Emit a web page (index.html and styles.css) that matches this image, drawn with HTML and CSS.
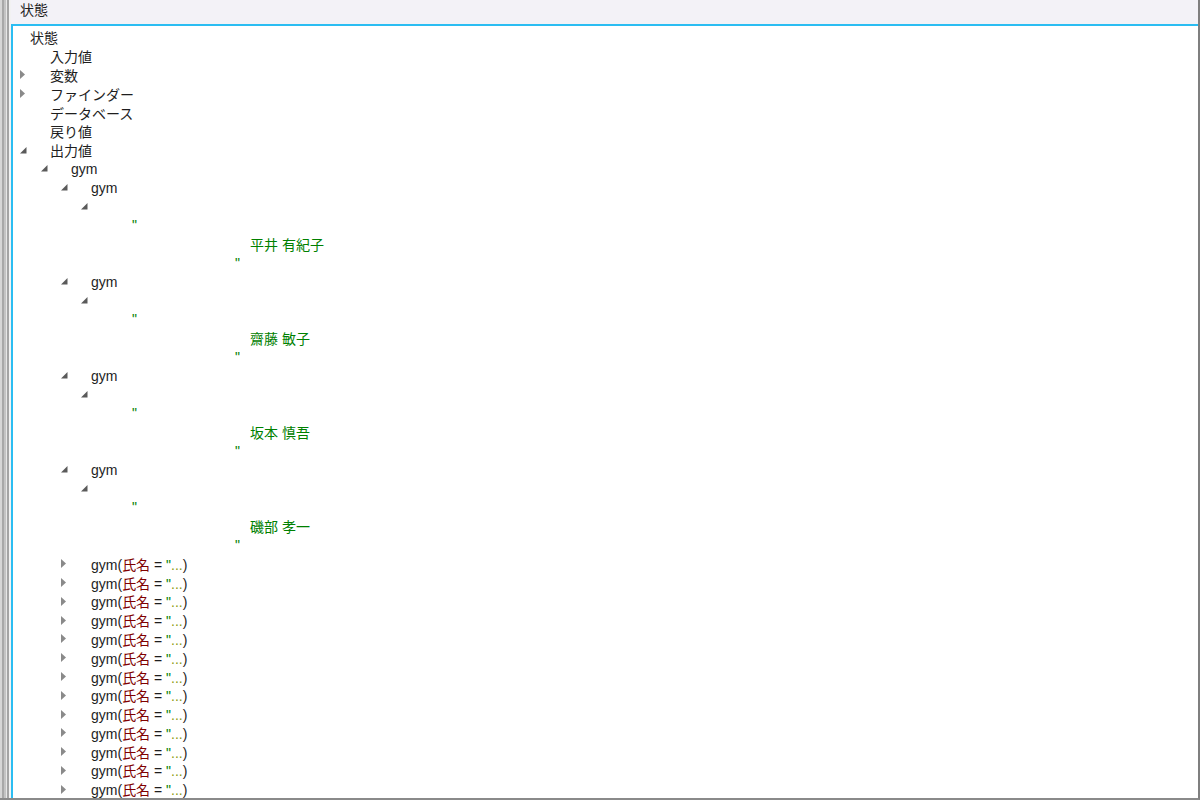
FILE: index.html
```html
<!DOCTYPE html>
<html lang="ja">
<head>
    <meta charset="UTF-8">
    <title>状態</title>
    <link rel="stylesheet" href="styles.css">
</head>
<body>
    <div class="window">
        <div class="side"></div>
        <div class="main">
            <div class="titlebar">状態</div>

            <!-- ツリー -->
            <div class="tree">
                <div class="row lv0"><span class="label">状態</span></div>
                <div class="row lv1"><span class="tw"></span><span class="label">入力値</span></div>
                <div class="row lv1"><span class="tw"><svg width="6" height="9"><polygon points="0,0 5,4.5 0,9" fill="#8a8a8a"/></svg></span><span class="label">変数</span></div>
                <div class="row lv1"><span class="tw"><svg width="6" height="9"><polygon points="0,0 5,4.5 0,9" fill="#8a8a8a"/></svg></span><span class="label">ファインダー</span></div>
                <div class="row lv1"><span class="tw"></span><span class="label">データベース</span></div>
                <div class="row lv1"><span class="tw"></span><span class="label">戻り値</span></div>
                <div class="row lv1"><span class="tw"><svg width="7" height="7"><polygon points="6.5,0 6.5,6.5 0,6.5" fill="#5a5a5a"/></svg></span><span class="label">出力値</span></div>
                <div class="row lv2"><span class="tw"><svg width="7" height="7"><polygon points="6.5,0 6.5,6.5 0,6.5" fill="#5a5a5a"/></svg></span><span class="label">gym</span></div>

                <div class="row lv3"><span class="tw"><svg width="7" height="7"><polygon points="6.5,0 6.5,6.5 0,6.5" fill="#5a5a5a"/></svg></span><span class="label">gym</span></div>
                <div class="row lv4"><span class="tw"><svg width="7" height="7"><polygon points="6.5,0 6.5,6.5 0,6.5" fill="#5a5a5a"/></svg></span></div>
                <div class="row open-quote"><span class="str">"</span></div>
                <div class="row value"><span class="str">平井 有紀子</span></div>
                <div class="row close-quote"><span class="str">"</span></div>

                <div class="row lv3"><span class="tw"><svg width="7" height="7"><polygon points="6.5,0 6.5,6.5 0,6.5" fill="#5a5a5a"/></svg></span><span class="label">gym</span></div>
                <div class="row lv4"><span class="tw"><svg width="7" height="7"><polygon points="6.5,0 6.5,6.5 0,6.5" fill="#5a5a5a"/></svg></span></div>
                <div class="row open-quote"><span class="str">"</span></div>
                <div class="row value"><span class="str">齋藤 敏子</span></div>
                <div class="row close-quote"><span class="str">"</span></div>

                <div class="row lv3"><span class="tw"><svg width="7" height="7"><polygon points="6.5,0 6.5,6.5 0,6.5" fill="#5a5a5a"/></svg></span><span class="label">gym</span></div>
                <div class="row lv4"><span class="tw"><svg width="7" height="7"><polygon points="6.5,0 6.5,6.5 0,6.5" fill="#5a5a5a"/></svg></span></div>
                <div class="row open-quote"><span class="str">"</span></div>
                <div class="row value"><span class="str">坂本 慎吾</span></div>
                <div class="row close-quote"><span class="str">"</span></div>

                <div class="row lv3"><span class="tw"><svg width="7" height="7"><polygon points="6.5,0 6.5,6.5 0,6.5" fill="#5a5a5a"/></svg></span><span class="label">gym</span></div>
                <div class="row lv4"><span class="tw"><svg width="7" height="7"><polygon points="6.5,0 6.5,6.5 0,6.5" fill="#5a5a5a"/></svg></span></div>
                <div class="row open-quote"><span class="str">"</span></div>
                <div class="row value"><span class="str">磯部 孝一</span></div>
                <div class="row close-quote"><span class="str">"</span></div>

                <div class="row lv3"><span class="tw"><svg width="6" height="9"><polygon points="0,0 5,4.5 0,9" fill="#8a8a8a"/></svg></span><span class="label">gym(<span class="attr">氏名</span> = <span class="str">"</span><span class="dots">...</span>)</span></div>
                <div class="row lv3"><span class="tw"><svg width="6" height="9"><polygon points="0,0 5,4.5 0,9" fill="#8a8a8a"/></svg></span><span class="label">gym(<span class="attr">氏名</span> = <span class="str">"</span><span class="dots">...</span>)</span></div>
                <div class="row lv3"><span class="tw"><svg width="6" height="9"><polygon points="0,0 5,4.5 0,9" fill="#8a8a8a"/></svg></span><span class="label">gym(<span class="attr">氏名</span> = <span class="str">"</span><span class="dots">...</span>)</span></div>
                <div class="row lv3"><span class="tw"><svg width="6" height="9"><polygon points="0,0 5,4.5 0,9" fill="#8a8a8a"/></svg></span><span class="label">gym(<span class="attr">氏名</span> = <span class="str">"</span><span class="dots">...</span>)</span></div>
                <div class="row lv3"><span class="tw"><svg width="6" height="9"><polygon points="0,0 5,4.5 0,9" fill="#8a8a8a"/></svg></span><span class="label">gym(<span class="attr">氏名</span> = <span class="str">"</span><span class="dots">...</span>)</span></div>
                <div class="row lv3"><span class="tw"><svg width="6" height="9"><polygon points="0,0 5,4.5 0,9" fill="#8a8a8a"/></svg></span><span class="label">gym(<span class="attr">氏名</span> = <span class="str">"</span><span class="dots">...</span>)</span></div>
                <div class="row lv3"><span class="tw"><svg width="6" height="9"><polygon points="0,0 5,4.5 0,9" fill="#8a8a8a"/></svg></span><span class="label">gym(<span class="attr">氏名</span> = <span class="str">"</span><span class="dots">...</span>)</span></div>
                <div class="row lv3"><span class="tw"><svg width="6" height="9"><polygon points="0,0 5,4.5 0,9" fill="#8a8a8a"/></svg></span><span class="label">gym(<span class="attr">氏名</span> = <span class="str">"</span><span class="dots">...</span>)</span></div>
                <div class="row lv3"><span class="tw"><svg width="6" height="9"><polygon points="0,0 5,4.5 0,9" fill="#8a8a8a"/></svg></span><span class="label">gym(<span class="attr">氏名</span> = <span class="str">"</span><span class="dots">...</span>)</span></div>
                <div class="row lv3"><span class="tw"><svg width="6" height="9"><polygon points="0,0 5,4.5 0,9" fill="#8a8a8a"/></svg></span><span class="label">gym(<span class="attr">氏名</span> = <span class="str">"</span><span class="dots">...</span>)</span></div>
                <div class="row lv3"><span class="tw"><svg width="6" height="9"><polygon points="0,0 5,4.5 0,9" fill="#8a8a8a"/></svg></span><span class="label">gym(<span class="attr">氏名</span> = <span class="str">"</span><span class="dots">...</span>)</span></div>
                <div class="row lv3"><span class="tw"><svg width="6" height="9"><polygon points="0,0 5,4.5 0,9" fill="#8a8a8a"/></svg></span><span class="label">gym(<span class="attr">氏名</span> = <span class="str">"</span><span class="dots">...</span>)</span></div>
                <div class="row lv3"><span class="tw"><svg width="6" height="9"><polygon points="0,0 5,4.5 0,9" fill="#8a8a8a"/></svg></span><span class="label">gym(<span class="attr">氏名</span> = <span class="str">"</span><span class="dots">...</span>)</span></div>
            </div>
        </div>
    </div>
</body>
</html>
```

FILE: styles.css
```css
html, body {
    margin: 0;
    padding: 0;
    background: #ffffff;
}
body {
    font-family: "Liberation Sans", "Noto Sans CJK JP", sans-serif;
    font-size: 14px;
    color: #1e1e1e;
}
.window {
    display: flex;
    width: 1200px;
    height: 800px;
    box-sizing: border-box;
    border-right: 2px solid #7f7f7f;
    border-bottom: 2px solid #8a8a8a;
    overflow: hidden;
}
/* 左の細いバー */
.side {
    width: 11px;
    flex: none;
    background: linear-gradient(to right,
        #d6d6d6 0, #d6d6d6 2px,
        #a8a8a8 2px, #a8a8a8 4px,
        #c4c4c4 4px, #c4c4c4 6px,
        #e6e6e6 6px, #e6e6e6 7px,
        #a4a4a4 7px, #a4a4a4 9px,
        #f2f2f2 9px);
}
.main {
    flex: 1;
    display: flex;
    flex-direction: column;
    min-width: 0;
}
.titlebar {
    height: 24px;
    flex: none;
    box-sizing: border-box;
    padding: 1px 0 0 9px;
    line-height: 18px;
    background: #f3f2f7;
}
.tree {
    flex: 1;
    border-top: 2px solid #2bbdf2;
    border-left: 2px solid #2bbdf2;
    padding-top: 2px;
    background: #ffffff;
    overflow: hidden;
}
.row {
    display: flex;
    align-items: center;
    height: 18.8px;
    white-space: nowrap;
}
.tw {
    width: 30px;
    flex: none;
    display: flex;
    align-items: center;
}
.tw svg {
    display: block;
}
.lv0 { padding-left: 17px; }
.lv1 { padding-left: 7px; }
.lv2 { padding-left: 28px; }
.lv3 { padding-left: 48px; }
.lv4 { padding-left: 68px; }
.open-quote { padding-left: 119px; }
.value { padding-left: 237px; }
.close-quote { padding-left: 222px; }
.str { color: #008000; }
.attr { color: #800000; }
.dots { color: #8c9a10; }
```
